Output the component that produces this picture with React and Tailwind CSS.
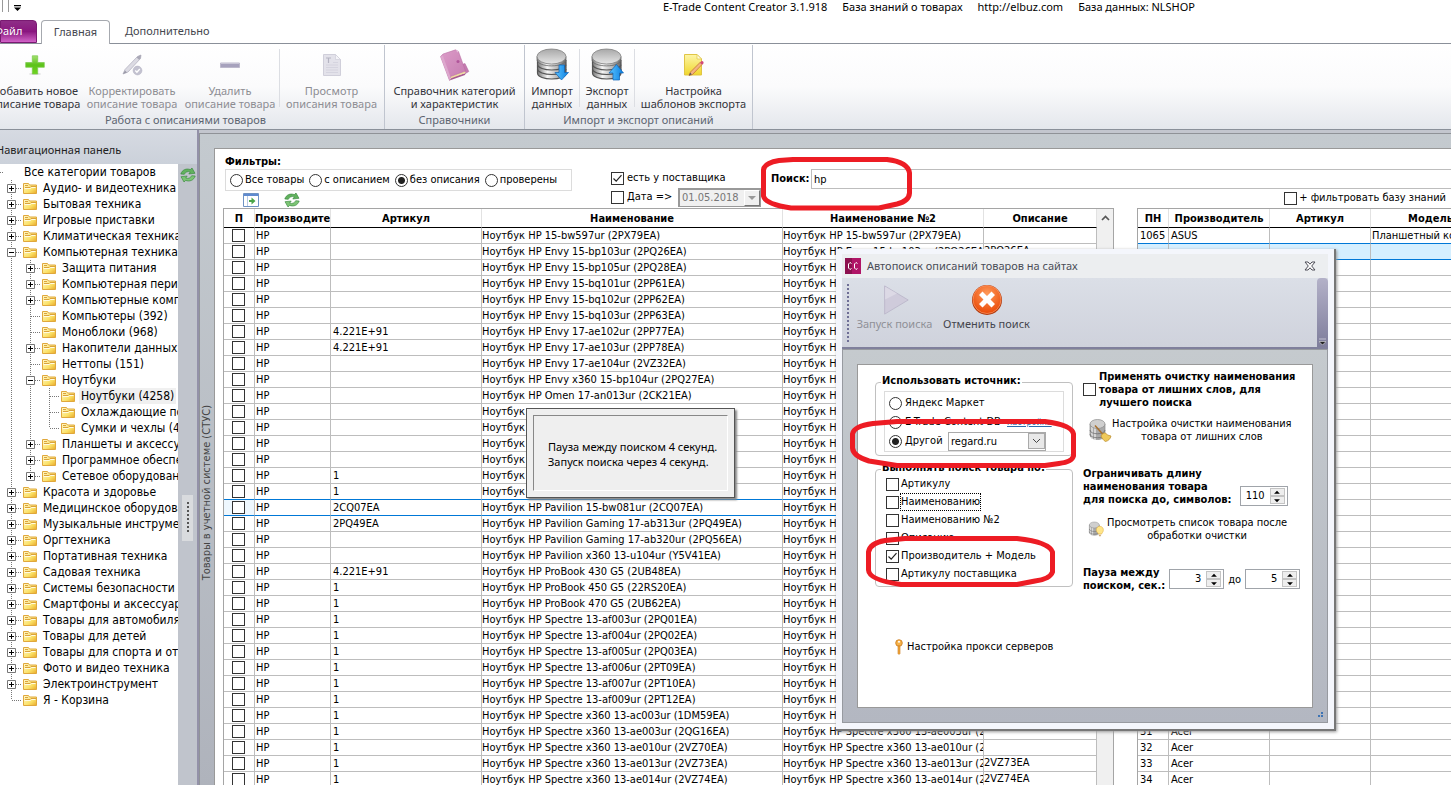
import React from "react";

const UI = "font-['Noto_Sans','Open_Sans',sans-serif]";

/* ---------- data ---------- */
const tree = [
  [1, "+", "Аудио- и видеотехника"],
  [1, "+", "Бытовая техника"],
  [1, "+", "Игровые приставки"],
  [1, "+", "Климатическая техника"],
  [1, "-", "Компьютерная техника"],
  [2, "+", "Защита питания"],
  [2, "+", "Компьютерная периферия"],
  [2, "+", "Компьютерные комплектующие"],
  [2, "", "Компьютеры (392)"],
  [2, "", "Моноблоки (968)"],
  [2, "+", "Накопители данных"],
  [2, "", "Неттопы (151)"],
  [2, "-", "Ноутбуки"],
  [3, "", "Ноутбуки (4258)", "sel"],
  [3, "", "Охлаждающие подставки"],
  [3, "", "Сумки и чехлы (4)", "last"],
  [2, "+", "Планшеты и аксессуары"],
  [2, "+", "Программное обеспечение"],
  [2, "+", "Сетевое оборудование", "last"],
  [1, "+", "Красота и здоровье"],
  [1, "+", "Медицинское оборудование"],
  [1, "+", "Музыкальные инструменты"],
  [1, "+", "Оргтехника"],
  [1, "+", "Портативная техника"],
  [1, "+", "Садовая техника"],
  [1, "+", "Системы безопасности"],
  [1, "+", "Смартфоны и аксессуары"],
  [1, "+", "Товары для автомобиля"],
  [1, "+", "Товары для детей"],
  [1, "+", "Товары для спорта и отдыха"],
  [1, "+", "Фото и видео техника"],
  [1, "+", "Электроинструмент"],
  [1, "", "Я - Корзина", "last"],
];

const goods = [
  ["", "15-bw597ur (2PX79EA)"],
  ["", "Envy 15-bp103ur (2PQ26EA)", "2PQ26EA"],
  ["", "Envy 15-bp105ur (2PQ28EA)"],
  ["", "Envy 15-bq101ur (2PP61EA)"],
  ["", "Envy 15-bq102ur (2PP62EA)"],
  ["", "Envy 15-bq103ur (2PP63EA)"],
  ["4.221E+91", "Envy 17-ae102ur (2PP77EA)"],
  ["4.221E+91", "Envy 17-ae103ur (2PP78EA)"],
  ["", "Envy 17-ae104ur (2VZ32EA)"],
  ["", "Envy x360 15-bp104ur (2PQ27EA)"],
  ["", "Omen 17-an013ur (2CK21EA)"],
  ["", ""],
  ["", ""],
  ["", ""],
  ["", ""],
  ["1", ""],
  ["1", ""],
  ["2CQ07EA", "Pavilion 15-bw081ur (2CQ07EA)"],
  ["2PQ49EA", "Pavilion Gaming 17-ab313ur (2PQ49EA)"],
  ["", "Pavilion Gaming 17-ab320ur (2PQ56EA)"],
  ["", "Pavilion x360 13-u104ur (Y5V41EA)"],
  ["4.221E+91", "ProBook 430 G5 (2UB48EA)"],
  ["1", "ProBook 450 G5 (22RS20EA)"],
  ["1", "ProBook 470 G5 (2UB62EA)"],
  ["1", "Spectre 13-af003ur (2PQ01EA)"],
  ["1", "Spectre 13-af004ur (2PQ02EA)"],
  ["1", "Spectre 13-af005ur (2PQ03EA)"],
  ["1", "Spectre 13-af006ur (2PT09EA)"],
  ["1", "Spectre 13-af007ur (2PT10EA)"],
  ["1", "Spectre 13-af009ur (2PT12EA)"],
  ["1", "Spectre x360 13-ac003ur (1DM59EA)"],
  ["1", "Spectre x360 13-ae003ur (2QG16EA)"],
  ["1", "Spectre x360 13-ae010ur (2VZ70EA)"],
  ["1", "Spectre x360 13-ae013ur (2VZ73EA)", "2VZ73EA"],
  ["1", "Spectre x360 13-ae014ur (2VZ74EA)", "2VZ74EA"],
];

const base = goods.map((_, i) => {
  if (i === 0) return ["1065", "ASUS", "Планшетный компьютер"];
  if (i > 30) return [String(i), "Acer", ""];
  return ["", "", ""];
});

/* ---------- form primitives ---------- */
function Check({ checked, label }) {
  return (
    <span className="relative block size-[13px] shrink-0">
      <input
        type="checkbox"
        aria-label={label}
        defaultChecked={checked}
        className="peer block size-[13px] appearance-none border border-[#333] bg-white"
      />
      <svg viewBox="0 0 13 13" className="pointer-events-none absolute inset-0 hidden size-[13px] peer-checked:block">
        <path d="M2.5 6.5 5.2 9.2 10.5 3.2" fill="none" stroke="#222" strokeWidth="1.2" />
      </svg>
    </span>
  );
}

function Radio({ name, checked }) {
  return (
    <input
      type="radio"
      name={name}
      defaultChecked={checked}
      className="block size-[13px] shrink-0 appearance-none rounded-full border border-[#333] bg-white checked:bg-[radial-gradient(circle,#222_0_3px,#fff_4px)]"
    />
  );
}

function Spin({ value, label, wide }) {
  return (
    <div className={"flex h-[20px] items-center justify-end border border-[#a0a4aa] bg-white pr-[2px] " + (wide ? "w-[55px]" : "w-[48px]")}>
      <input aria-label={label} defaultValue={value} className="w-0 min-w-0 flex-1 pr-[5px] text-right text-[11px] leading-4 outline-none" />
      <div className="flex flex-col">
        {["M1 4.5h7L4.5 1z", "M1 1.5h7L4.5 5z"].map((d, i) => (
          <button key={i} aria-label={i ? "Меньше" : "Больше"} className="flex h-[8px] w-[15px] items-center justify-center border border-[#c4c4c4] bg-[#eee]">
            <svg viewBox="0 0 9 6" className="h-[5px] w-[8px]"><path d={d} fill="#000" /></svg>
          </button>
        ))}
      </div>
    </div>
  );
}

/* ---------- icons ---------- */
function Refresh() {
  return (
    <svg viewBox="0 0 16 16" className="size-[16px]">
      <path d="M.8 7C2 2.800 6.500 1 10.300 2.600L12 1l3 5.300-6.200.7 1.500-2C8 4 5.500 4.800 4.300 7.300z" fill="#62b25e" stroke="#2f8236" strokeWidth=".6" />
      <path d="M15.200 9C14 13.200 9.500 15 5.700 13.400L4 15 1 9.700 7.200 9l-1.500 2c2.300 1 4.800.200 6-2.300z" fill="#7cc474" stroke="#2f8236" strokeWidth=".6" />
    </svg>
  );
}

function Folder() {
  return (
    <svg viewBox="0 0 14 12" className="h-[12px] w-[14px] shrink-0">
      <defs>
        <linearGradient id="fg" x1="0" y1="0" x2="1" y2="1">
          <stop offset="0" stopColor="#fff8cf" /><stop offset=".6" stopColor="#fbe269" /><stop offset="1" stopColor="#e9a928" />
        </linearGradient>
      </defs>
      <path d="M.5 11.500v-10h5l1 1.500h7v8.500z" fill="url(#fg)" stroke="#e0a83c" />
      <path d="M2 3.500h3M2 5.500h5l1-1h5" fill="none" stroke="#dba33a" />
      <path d="M1.500 6.500h6l1-1h4" fill="none" stroke="#fffbe2" />
    </svg>
  );
}

function PlusIcon() {
  return (
    <svg viewBox="0 0 20 20" className="size-[20px]">
      <defs><linearGradient id="pg" x1="0" y1="0" x2="0" y2="1"><stop offset="0" stopColor="#a4e070" /><stop offset=".5" stopColor="#5cc21a" /><stop offset="1" stopColor="#6fd420" /></linearGradient></defs>
      <ellipse cx="10" cy="19" rx="6" ry="1" fill="#ddd" />
      <path d="M7.300.800h5.400v6.700h6.600v4.800h-6.600v6.700H7.300v-6.700H.700V7.500h6.600z" fill="url(#pg)" stroke="#79c84a" strokeWidth=".7" />
    </svg>
  );
}

function PencilIcon() {
  return (
    <svg viewBox="0 0 22 22" className="size-[22px]">
      <path d="M2 20 4 15.500 16.500 2.500 20 1l-.5 3.500L7 18z" fill="#dcdbe3" stroke="#b4b3c0" strokeWidth=".8" />
      <path d="M2 20l4-1.500-2-2z" fill="#9b9aa8" />
      <path d="M16.500 2.500 20 1l-.5 3.500-1.500 1.200-2.400-2.200z" fill="#a9a8b6" />
      <circle cx="16.500" cy="16.500" r="4.400" fill="#c3c2d0" stroke="#b3b2c2" strokeWidth=".6" />
      <path d="m14.300 16.500 1.600 1.700 2.900-3.200" fill="none" stroke="#fff" strokeWidth="1.300" />
    </svg>
  );
}

function MinusIcon() {
  return (
    <svg viewBox="0 0 20 20" className="size-[20px]">
      <path d="M.5 8h19v4.500H.5z" fill="#a7a2bd" stroke="#bdb9cc" />
      <path d="M1 8.500h18" stroke="#c9c6d6" />
    </svg>
  );
}

function DocIcon() {
  return (
    <svg viewBox="0 0 18 22" className="h-[22px] w-[18px]">
      <path d="M.5.500h12l5 5v16H.5z" fill="#e3e2ea" stroke="#d0cfda" />
      <path d="M12.500.500v5h5z" fill="#f4f4f8" stroke="#d0cfda" strokeWidth=".7" />
      <path d="M3 4h5M5.500 4v5" stroke="#b5b4c2" strokeWidth="1.200" />
      <path d="M3 11h12M3 13.500h12M3 16h12M3 18.500h12M10 8.500h5" stroke="#d2d1dc" strokeWidth=".8" />
    </svg>
  );
}

function BookIcon() {
  return (
    <svg viewBox="0 0 32 32" className="size-[32px]">
      <defs><linearGradient id="bk" x1="0" y1="0" x2="1" y2="1"><stop offset="0" stopColor="#dc9cc8" /><stop offset="1" stopColor="#c57bb0" /></linearGradient></defs>
      <path d="M23 15.500l3-1 3.800 8-3.300 2z" fill="#c57bb0" stroke="#ad6597" strokeWidth=".5" />
      <path d="M10.500 31.500 26 26l.8-2L13 28z" fill="#a65a91" />
      <path d="M11.500 29.500 26.500 24l-.5-2-15.500 5.500z" fill="#f0dba0" />
      <path d="M1.500 7.500 4 5 16.500.800l3 1.700L26.500 22 11.500 27.500l-1 4z" fill="url(#bk)" stroke="#b5689f" strokeWidth=".5" />
      <path d="M1.500 7.500l2.500-.5L11.500 28l-1 3.500z" fill="#dda8cd" />
      <path d="M16.500.800 19.500 2.500l-1 1z" fill="#e8bfdc" />
      <circle cx="19" cy="12.500" r="1.500" fill="#b0559a" />
    </svg>
  );
}

function Db({ up }) {
  return (
    <svg viewBox="0 0 33 33" className="size-[33px]">
      <defs>
        <linearGradient id="dbg" x1="0" y1="0" x2="1" y2="0"><stop offset="0" stopColor="#777" /><stop offset=".35" stopColor="#f5f5f5" /><stop offset=".7" stopColor="#b5b5b5" /><stop offset="1" stopColor="#666" /></linearGradient>
        <linearGradient id="dbt" x1="0" y1="0" x2="0" y2="1"><stop offset="0" stopColor="#a8a8a8" /><stop offset="1" stopColor="#e6e6e6" /></linearGradient>
        <linearGradient id="ar" x1="0" y1="0" x2="1" y2="0"><stop offset="0" stopColor="#5cc4ff" /><stop offset="1" stopColor="#0b7fe0" /></linearGradient>
      </defs>
      {[21.500, 17, 12.500].map((y) => (
        <path key={y} d={`M1.500 ${y}v3.500c0 8 28.500 8 28.500 0V${y}z`} fill="url(#dbg)" stroke="#555" strokeWidth="1.200" />
      ))}
      <path d="M1 8.500v3c0 8.500 29 8.500 29 0v-3z" fill="url(#dbg)" stroke="#666" strokeWidth=".8" />
      <ellipse cx="15.500" cy="8.500" rx="14.500" ry="7.500" fill="url(#dbt)" stroke="#808080" strokeWidth=".8" />
      <path d={up ? "M22 32V25h-4l7.500-8.500L32.500 25h-4v7z" : "M23 17h5.500v7.500h4L25.500 32 19 24.500h4z"} fill="url(#ar)" stroke="#0b63b8" strokeWidth=".7" />
    </svg>
  );
}

function NoteIcon() {
  return (
    <svg viewBox="0 0 22 24" className="h-[24px] w-[22px]">
      <defs><linearGradient id="nt" x1="0" y1="0" x2="0" y2="1"><stop offset="0" stopColor="#fdf5a8" /><stop offset="1" stopColor="#f0d72c" /></linearGradient></defs>
      <path d="M1.500 1.500H14l4.500 4.500v16h-17z" fill="url(#nt)" stroke="#e0c545" />
      <path d="M14 1.500 18.500 6H14z" fill="#fffbe0" stroke="#e0c545" strokeWidth=".7" />
      <path d="M6 22.500 7.500 19 17.500 9l2 2L9.500 21.500z" fill="#f2b483" stroke="#c26a2a" strokeWidth=".7" />
      <path d="M6 22.500l1.200-2.800 1.600 1.600z" fill="#555" />
      <circle cx="19" cy="9.700" r="1.600" fill="#d3487a" />
    </svg>
  );
}

function SmallDb({ bulb, className }) {
  return (
    <svg viewBox="0 0 24 24" className={className}>
      <path d="M2 6v11c0 6 15 6 15 0V6z" fill="#a9a9a9" stroke="#8b8b8b" strokeWidth=".7" />
      <path d="M4 9v12M7 10v12" stroke="#e4e4e4" strokeWidth="1.500" />
      <path d="M2 12c0 5 15 5 15 0M2 16c0 5 15 5 15 0" fill="none" stroke="#6f6f6f" strokeWidth=".8" />
      <ellipse cx="9.500" cy="6" rx="7.500" ry="4.500" fill="#cfcfcf" stroke="#8b8b8b" strokeWidth=".7" />
      {bulb ? (
        <g>
          <path d="M12.500 14a5.300 5.300 0 1 1 10.500 0c0 2.500-2 3.500-2.500 5.500h-5c-.5-2-3-3-3-5.500z" fill="#ffe58a" stroke="#dfae3c" strokeWidth=".8" />
          <path d="M15.500 20.500h4.500l-2 3z" fill="#c9a46a" />
        </g>
      ) : (
        <g>
          <path d="M7 7.500 15.500 17" stroke="#a8702e" strokeWidth="1.500" />
          <path d="M13 18c1-2 2.500-3.500 4.500-3l2 2 3.500 1c-.5 3-3 5-5.500 5.500-2-1-3.500-3-4.500-5.500z" fill="#efc95a" stroke="#b98a2a" strokeWidth=".7" />
        </g>
      )}
    </svg>
  );
}

/* ---------- ribbon ---------- */
function RibbonButton({ icon, lines, width, disabled }) {
  return (
    <button disabled={disabled} className={"flex shrink-0 flex-col items-center text-[11px] leading-[13px] whitespace-nowrap " + width + (disabled ? " text-[#8d8d93]" : " text-[#33343a]")}>
      <span className="flex h-[39px] items-center justify-center">{icon}</span>
      <span>{lines[0]}</span>
      <span>{lines[1]}</span>
    </button>
  );
}

function RibbonGroup({ title, children, className }) {
  return (
    <section className={"flex shrink-0 flex-col border-r border-[#c0c5cf] " + className}>
      <div className="flex h-[67px]">{children}</div>
      <h2 className="text-center text-[11px] leading-4 text-[#5c6470]">{title}</h2>
    </section>
  );
}

function Sep() {
  return <span className="mt-1 h-[58px] w-px shrink-0 bg-[#dcdee3]" />;
}

/* ---------- tree ---------- */
function Guide({ mark, cell, end }) {
  return (
    <svg viewBox="0 0 19 16" className="h-[16px] w-[19px] shrink-0">
      <path d={end ? "M9.500 0v8" : "M9.500 0v16"} stroke="#777" strokeDasharray="1 1" />
      {cell === "node" && <path d="M10 8.500h9" stroke="#777" strokeDasharray="1 1" />}
      {mark && (
        <g>
          <path d="M5.500 4.500h8v8h-8z" fill="#fff" stroke="#777" />
          <path d={mark === "+" ? "M7 8.500h5M9.500 6v5" : "M7 8.500h5"} stroke="#000" />
        </g>
      )}
    </svg>
  );
}

function NavTree() {
  return (
    <ul className="text-[12px] leading-4">
      <li className="flex h-4 items-center whitespace-nowrap">
        <span className="w-[3px] border-t border-dotted border-[#777]" />
        <span className="ml-[21px]">Все категории товаров</span>
      </li>
      {tree.map(([level, mark, text, flag]) => (
        <li key={text} className="flex h-4 items-center pl-[2px] whitespace-nowrap">
          {level > 1 && <Guide cell="line" />}
          {level > 2 && <Guide cell="line" />}
          <Guide cell="node" mark={mark} end={flag === "last"} />
          <span className="ml-[2px]"><Folder /></span>
          <span className={"ml-[4px] px-[2px] " + (flag === "sel" ? "bg-[#f0f0f0]" : "")}>{text}</span>
        </li>
      ))}
    </ul>
  );
}

/* ---------- tables ---------- */
const th = "h-[19px] overflow-hidden border-b border-black border-r border-r-[#e2e2e2] p-0 pt-[2px] text-center text-[11px] leading-4 font-bold whitespace-nowrap";
const text = "pt-px leading-[14px]";

function Cell({ children, line, fit, fill }) {
  return (
    <td className={"h-4 overflow-hidden border-r border-b border-r-[#bdbdbd] p-0 whitespace-nowrap " + (line || "border-b-[#bdbdbd]") + " " + (fit || text) + " " + (fill || "")}>
      {children}
    </td>
  );
}

function GoodsTable() {
  return (
    <div className="flex w-[891px] shrink-0 border border-b-0 border-[#a5a5a5]">
      <table className="w-[873px] table-fixed border-separate border-spacing-0">
        <colgroup>
          <col className="w-[31px]" /><col className="w-[76px]" /><col className="w-[151px]" />
          <col className="w-[301px]" /><col className="w-[201px]" /><col className="w-[113px]" />
        </colgroup>
        <thead>
          <tr>
            {["П", "Производитель", "Артикул", "Наименование", "Наименование №2", "Описание"].map((h, i) => (
              <th key={h} className={th + (i === 1 ? " text-left" : "")}>{h}</th>
            ))}
          </tr>
        </thead>
        <tbody>
          {goods.map(([art, model, desc], i) => {
            const line = i === 16 || i === 17 ? "border-b-[#0078d7]" : "";
            const name = "Ноутбук HP " + model;
            return (
              <tr key={i}>
                <Cell line={line} fit="leading-[15px]" fill={i === 17 ? "bg-[#eef7fe]" : ""}><div className="flex justify-center pr-[2px]"><Check label={name} /></div></Cell>
                <Cell line={line}><span className="pl-[1px]">HP</span></Cell>
                <Cell line={line}><span className="pl-[2px]">{art}</span></Cell>
                <Cell line={line}>{model ? name : "Ноутбук"}</Cell>
                <Cell line={line}>{name}</Cell>
                <Cell line={line} fit="align-top leading-[13px]">{desc}</Cell>
              </tr>
            );
          })}
        </tbody>
      </table>
      <div className="ml-auto w-[16px] bg-[#f0f0f0]">
        <button aria-label="Вверх" className="flex h-[18px] w-full items-center justify-center">
          <svg viewBox="0 0 9 6" className="h-[6px] w-[9px]"><path d="M1 5 4.500 1.500 8 5" fill="none" stroke="#555" strokeWidth="1.700" /></svg>
        </button>
      </div>
    </div>
  );
}

function BaseTable() {
  return (
    <div className="ml-[23px] min-w-0 flex-1 overflow-hidden border-t border-l border-[#a5a5a5]">
      <table className="w-full min-w-[353px] table-fixed border-separate border-spacing-0">
        <colgroup><col className="w-[31px]" /><col className="w-[101px]" /><col className="w-[101px]" /><col /></colgroup>
        <thead>
          <tr>{["ПН", "Производитель", "Артикул", "Модель"].map((h) => <th key={h} className={th}>{h}</th>)}</tr>
        </thead>
        <tbody>
          {base.map(([n, brand, model], i) => {
            const line = i < 2 ? "border-b-[#0078d7]" : "";
            const fill = i === 1 ? "bg-[#d5efff]" : "";
            return (
              <tr key={i}>
                <Cell line={line} fill={fill}><span className="pl-[2px]">{n}</span></Cell>
                <Cell line={line} fill={fill}><span className="pl-[2px]">{brand}</span></Cell>
                <Cell line={line} fill={fill} />
                <Cell line={line} fill={fill}><span className="pl-[1px]">{model}</span></Cell>
              </tr>
            );
          })}
        </tbody>
      </table>
    </div>
  );
}

/* ---------- filters ---------- */
function Filters() {
  const modes = ["Все товары", "с описанием", "без описания", "проверены"];
  return (
    <div className="flex h-[59px] pl-[10px]">
      <div className="w-[347px] shrink-0 pt-[6px]">
        <div className="h-[14px] leading-[14px] font-bold">Фильтры:</div>
        <div className="flex h-[22px] items-center gap-[5px] border border-[#dcdcdc] pl-[4px] whitespace-nowrap">
          {modes.map((m, i) => (
            <label key={m} className="flex items-center gap-[2px]"><Radio name="mode" checked={i === 2} />{m}</label>
          ))}
        </div>
        <div className="flex h-[17px] items-center gap-[25px] pl-[18px]">
          <button aria-label="Перенести">
            <svg viewBox="0 0 16 14" className="block h-[14px] w-[16px]">
              <path d="M.5.500h15v13H.5z" fill="#fff" stroke="#6f93c4" /><path d="M1 2h14" stroke="#5f8bd0" strokeWidth="2" />
              <path d="M4.500 3v10" stroke="#b9cbe4" /><path d="M6 7h2.500V4.500L12.500 8l-4 3.500V9H6z" fill="#4aa548" />
            </svg>
          </button>
          <button aria-label="Обновить"><Refresh /></button>
        </div>
      </div>
      <div className="ml-[39px] w-[160px] shrink-0 pt-[20px]">
        <label className="flex h-[19px] items-center gap-[3px]"><Check checked />есть у поставщика</label>
        <div className="flex h-[18px] items-center">
          <label className="flex w-[67px] items-center gap-[3px] whitespace-nowrap"><Check />Дата =&gt;</label>
          <div className="relative h-[19px] w-[83px]">
            <select disabled aria-label="Дата" className="h-[19px] w-full appearance-none border border-t-2 border-l-2 border-[#999] bg-[#f0f0f0] pl-[2px] text-[11px] leading-4 text-[#777] opacity-100">
              <option>01.05.2018</option>
            </select>
            <span className="pointer-events-none absolute top-[2px] right-px flex h-[16px] w-[16px] items-center justify-center border border-white border-r-[#777] border-b-[#777] bg-[#f0f0f0]">
              <svg viewBox="0 0 8 4" className="h-[4px] w-[8px]"><path d="M0 0h8L4 4z" fill="#999" /></svg>
            </span>
          </div>
        </div>
      </div>
      <div className="min-w-0 flex-1 pt-[20px]">
        <label className="flex h-[20px] items-center font-bold">
          <span className="w-[40px] whitespace-nowrap">Поиск:</span>
          <input defaultValue="hp" className="h-[20px] min-w-0 flex-1 border border-r-0 border-[#bdbdbd] pl-[2px] text-[11px] font-normal outline-none" />
        </label>
        <label className="flex h-[18px] items-center justify-end gap-[2px] pr-[5px]"><Check />+ фильтровать базу знаний</label>
      </div>
    </div>
  );
}

/* ---------- dialogs ---------- */
function PauseMessage() {
  return (
    <div role="status" className={"absolute top-[408px] left-[526px] w-[209px] border border-[#555] bg-[#efefef] p-[6px] shadow-[2px_2px_2px_#888] " + UI}>
      <div className="border border-t-[#888] border-r-white border-b-white border-l-[#888] px-[14px] pt-[23px] pb-[21px] text-[11px] leading-[15px] whitespace-nowrap text-black">
        <p>Пауза между поиском 4 секунд.</p>
        <p>Запуск поиска через 4 секунд.</p>
      </div>
    </div>
  );
}

const legend = "absolute -top-[10px] left-[5px] bg-white px-[1px] text-[11px] leading-4 font-bold whitespace-nowrap";

function SearchDialog() {
  const by = [["Артикулу"], ["Наименованию"], ["Наименованию №2"], ["Описанию"], ["Производитель + Модель", true], ["Артикулу поставщика"]];
  return (
    <div role="dialog" aria-label="Автопоиск описаний товаров на сайтах" className="absolute top-[249px] left-[836px] flex h-[482px] w-[500px] flex-col border-r-2 border-b-2 border-[#777] bg-[#f4f6fc] px-[6px] pb-[6px] shadow-[1px_1px_3px_#999]">
      <header className="mt-[5px] flex h-[24px] shrink-0 items-center bg-[#eceef0] pl-[3px]">
        <svg viewBox="0 0 16 16" className="size-[16px]">
          <path d="M0 0h16v16H0z" fill="#b01567" /><path d="M0 0h7v16H0z" fill="#8d1150" />
          <path d="M6.500 5.500 5 4.500 3.500 6v4L5 11.500l1.500-1M12.500 5.500 11 4.500 9.500 6v4l1.500 1.500 1.500-1" fill="none" stroke="#fff" />
        </svg>
        <h2 className={"ml-[6px] text-[11px] leading-4 text-[#4a4d57] " + UI}>Автопоиск описаний товаров на сайтах</h2>
        <button aria-label="Закрыть" className="mr-[12px] ml-auto">
          <svg viewBox="0 0 12 10" className="block h-[10px] w-[12px]"><path d="M1 1h3l2 2.200L8 1h3L7.700 5 11 9H8L6 6.800 4 9H1l3.300-4z" fill="#fff" stroke="#4d4d57" /></svg>
        </button>
      </header>
      <div className="flex h-[71px] shrink-0 border-b-2 border-[#80809c] bg-linear-to-b from-[#dbdfe7] to-[#cfd2dc]">
        <span className="mt-[6px] ml-[5px] h-[58px] w-[2px] bg-[repeating-linear-gradient(#6f6f96_0_2px,transparent_2px_4px)]" />
        <div className={"flex pt-[6px] text-[11px] leading-4 whitespace-nowrap " + UI}>
          <button disabled className="flex w-[91px] flex-col items-center text-[#8f9097]">
            <svg viewBox="0 0 32 34" className="h-[32px] w-[32px]"><path d="M5 2v30l25-15z" fill="#cfcbdb" stroke="#bcb8cb" /><path d="M5.500 16.500 18 10 5.500 3z" fill="#dcd9e5" /></svg>
            <span>Запуск поиска</span>
          </button>
          <button className="flex w-[93px] flex-col items-center text-[#44454d]">
            <svg viewBox="0 0 32 32" className="size-[32px]">
              <defs><radialGradient id="cx" cx=".5" cy=".3" r=".7"><stop offset="0" stopColor="#ff9a5a" /><stop offset="1" stopColor="#ea4a08" /></radialGradient></defs>
              <circle cx="16" cy="16" r="15" fill="#b33a0c" /><circle cx="16" cy="15.500" r="14" fill="url(#cx)" stroke="#ff9b69" strokeWidth=".7" />
              <path d="m11.500 7.500 4.500 4.500 4.500-4.500 3.500 3.500-4.500 4.500L24 20l-3.500 3.500L16 19l-4.500 4.500L8 20l4.500-4.500L8 11z" fill="#fff" />
            </svg>
            <span>Отменить поиск</span>
          </button>
        </div>
        <span className="ml-auto flex w-[11px] items-end justify-center rounded-t-sm bg-linear-to-b from-[#b3b1c8] to-[#7f7e9c] pb-[2px]">
          <svg viewBox="0 0 7 7" className="size-[7px]"><path d="M0 1h7M0 3.500h7L3.500 7z" fill="#222" stroke="#fff" strokeWidth=".5" /></svg>
        </span>
      </div>
      <div className="relative min-h-0 flex-1 border border-[#979aa0] bg-linear-to-b from-[#c5cace] to-[#b3b7c1] px-[14px] pt-[14px] pb-[14px]">
        <div className="flex h-full border border-[#999] bg-white pl-[17px] text-[11px]">
          <div className="w-[198px] shrink-0 pt-[17px]">
            <div role="group" aria-label="Использовать источник" className="relative h-[74px] rounded border border-[#c0c0c0] px-[8px] pt-[8px]">
              <span className={legend}>Использовать источник:</span>
              <div className="flex h-[61px] flex-col border border-[#dcdcdc] pt-[2px] pl-[4px]">
                <label className="flex h-[19px] items-center gap-[3px]"><Radio name="src" />Яндекс Маркет</label>
                <div className="flex h-[19px] items-center whitespace-nowrap">
                  <label className="flex w-[118px] items-center gap-[3px]"><Radio name="src" />E-Trade Content DB</label>
                  <a href="#settings" className="text-[9px] text-[#2b6cab] underline">настройка</a>
                </div>
                <div className="flex h-[19px] items-center">
                  <label className="flex w-[59px] items-center gap-[3px]"><Radio name="src" checked />Другой</label>
                  <div className="relative w-[98px]">
                    <select aria-label="Сайт" className="block h-[19px] w-full appearance-none border border-[#aaa] bg-white pl-[2px] text-[11px] leading-4"><option>regard.ru</option></select>
                    <span className="pointer-events-none absolute top-px right-px flex h-[16px] w-[17px] items-center justify-center border border-[#aaa] bg-[#e8e8e8]">
                      <svg viewBox="0 0 9 6" className="h-[6px] w-[9px]"><path d="M1 1l3.500 3.500L8 1" fill="none" stroke="#444" /></svg>
                    </span>
                  </div>
                </div>
              </div>
            </div>
            <div role="group" aria-label="Выполнять поиск товара по" className="relative mt-[13px] h-[118px] rounded border border-[#c0c0c0] pt-[5px] pl-[10px]">
              <span className={legend}>Выполнять поиск товара по:</span>
              {by.map(([t, on], i) => (
                <label key={t} className="flex h-[18px] items-center gap-[2px] whitespace-nowrap">
                  <Check checked={on} /><span className={i === 1 ? "outline outline-dotted outline-black" : ""}>{t}</span>
                </label>
              ))}
            </div>
            <button className="mt-[52px] ml-[20px] flex items-center gap-[4px]">
              <svg viewBox="0 0 8 16" className="h-[16px] w-[8px]"><circle cx="4" cy="4" r="3.300" fill="#f6b24a" stroke="#c9791c" strokeWidth=".8" /><circle cx="4" cy="2.800" r="1" fill="#fff" /><path d="M3 7h2v7.500L4 15.500 3 14.500z" fill="#f3a93e" stroke="#c9791c" strokeWidth=".6" /></svg>
              Настройка прокси серверов
            </button>
          </div>
          <div className="ml-[10px] min-w-0 flex-1 pt-[5px] leading-[13px] whitespace-nowrap">
            <label className="flex items-center gap-[3px] font-bold">
              <Check />
              <span>Применять очистку наименования<br />товара от лишних слов, для<br />лучшего поиска</span>
            </label>
            <button className="mt-[8px] ml-[5px] flex items-center text-center">
              <SmallDb className="size-[24px]" />
              <span>Настройка очистки наименования<br />товара от лишних слов</span>
            </button>
            <div className="mt-[24px] flex items-end gap-[8px] font-bold">
              <p>Ограничивать длину<br />наименования товара<br />для поиска до, символов:</p>
              <div className="font-normal"><Spin value="110" label="Символов" /></div>
            </div>
            <button className="mt-[10px] ml-[5px] flex items-center gap-[3px] text-center">
              <SmallDb bulb className="size-[16px]" />
              <span>Просмотреть список товара после<br />обработки очистки</span>
            </button>
            <div className="mt-[24px] flex items-center gap-[4px]">
              <p className="font-bold">Пауза между<br />поиском, сек.:</p>
              <Spin wide value="3" label="Пауза от" /><span>до</span><Spin wide value="5" label="Пауза до" />
            </div>
          </div>
        </div>
        <svg viewBox="0 0 6 6" className="absolute right-[4px] bottom-[4px] size-[6px]"><path d="M4 0h2v2H4zM4 3h2v2H4zM1 3h2v2H1z" fill="#3d74b5" /></svg>
      </div>
    </div>
  );
}

function Markers() {
  return (
    <svg viewBox="0 0 340 440" className="pointer-events-none absolute top-[150px] left-[745px] h-[440px] w-[340px]">
      <g fill="none" stroke="#ed1c24" strokeWidth="5" strokeLinejoin="round">
        <path d="M34 10.500 48 9.500H142Q163 12 164.500 23V43Q164 51 152 54L134 58H46Q20 54 18.500 46V20Q19 13 34 10.500z" />
        <path d="M128 273.500 152 271.500H300Q327 275 328.500 284V306Q327 312 314 313.500L300 315.500H152L124 311Q108 306 107.500 298V284Q109 276 128 273.500z" />
        <path d="M140 390.500 160 388.500H272Q304 392 307.500 402V422Q305 429 290 431L272 434.500H156Q124 430 123.500 420V402Q125 393 140 390.500z" />
      </g>
    </svg>
  );
}

/* ---------- page ---------- */
export default function App() {
  return (
    <div className="relative flex h-screen min-w-[1200px] flex-col overflow-hidden bg-white font-['DejaVu_Sans_Condensed','Noto_Sans',sans-serif] text-[11px] text-black">
      <header className={"flex h-[20px] shrink-0 text-[11px] leading-[14px] " + UI}>
        <button aria-label="Настройка панели" className="flex h-[13px] gap-[5px] pl-[2px]">
          <span className="h-[12px] w-px bg-[#999]" /><span className="h-[12px] w-px bg-[#999]" />
          <svg viewBox="0 0 7 6" className="mt-[5px] h-[6px] w-[7px]"><path d="M0 0h7v1.300H0zM0 2.500h7L3.500 6z" /></svg>
        </button>
        <h1 className="flex flex-1 justify-center gap-[15px] pl-[386px]">
          <span>E-Trade Content Creator 3.1.918</span><span>База знаний о товарах</span><span>http://elbuz.com</span><span>База данных: NLSHOP</span>
        </h1>
      </header>

      <nav className={"flex h-[24px] shrink-0 items-stretch border-b border-[#8a9099] text-[11px] text-[#44464e] " + UI}>
        <button className="w-[37px] rounded-tr-sm border border-[#7a1a72] bg-linear-to-b from-[#8e2d86] via-[#8a1580] to-[#d262c8] text-white"><span className="-ml-[7px] flex">Файл</span></button>
        <button className="-mb-px ml-[4px] w-[69px] rounded-t border border-b-0 border-[#a6a9af] bg-white">Главная</button>
        <button className="ml-[15px]">Дополнительно</button>
      </nav>

      <div className={"flex h-[86px] shrink-0 border-b border-[#8a9099] bg-linear-to-b from-white via-[#fbfbfc] to-[#e4e7ec] pt-px " + UI}>
        <RibbonGroup title="Работа с описаниями товаров" className="-ml-[13px] w-[398px]">
          <RibbonButton width="w-[96px]" icon={<PlusIcon />} lines={["Добавить новое", "описание товара"]} />
          <RibbonButton width="w-[98px]" disabled icon={<PencilIcon />} lines={["Корректировать", "описание товара"]} />
          <RibbonButton width="w-[98px]" disabled icon={<MinusIcon />} lines={["Удалить", "описание товара"]} />
          <Sep />
          <RibbonButton width="w-[103px]" disabled icon={<DocIcon />} lines={["Просмотр", "описания товара"]} />
        </RibbonGroup>
        <RibbonGroup title="Справочники" className="w-[140px]">
          <RibbonButton width="w-full" icon={<BookIcon />} lines={["Справочник категорий", "и характеристик"]} />
        </RibbonGroup>
        <RibbonGroup title="Импорт и экспорт описаний" className="w-[228px]">
          <RibbonButton width="w-[54px]" icon={<Db />} lines={["Импорт", "данных"]} />
          <Sep />
          <RibbonButton width="w-[54px]" icon={<Db up />} lines={["Экспорт", "данных"]} />
          <Sep />
          <RibbonButton width="w-[117px]" icon={<NoteIcon />} lines={["Настройка", "шаблонов экспорта"]} />
        </RibbonGroup>
      </div>

      <div className="flex min-h-0 flex-1 bg-[#c3c6ce]">
        <aside className="flex w-[199px] shrink-0 flex-col border-r-2 border-[#9391a8]">
          <h2 className={"h-[34px] overflow-hidden bg-linear-to-b from-[#d6dae2] to-[#cbd1da] pt-[12px] text-[11px] leading-4 whitespace-nowrap text-[#222] " + UI}>
            <span className="-ml-[4px] block">Навигационная панель</span>
          </h2>
          <div className="flex min-h-0 flex-1">
            <div className="w-[178px] shrink-0 overflow-hidden bg-white"><NavTree /></div>
            <div className="flex flex-1 flex-col items-center bg-[#c0c4cc] pt-[3px]">
              <button aria-label="Обновить дерево"><Refresh /></button>
              <span className="mt-[312px] flex h-[46px] w-[11px] justify-center bg-[#d9dbde] py-[7px]">
                <span className="w-[2px] bg-[repeating-linear-gradient(#555_0_2px,transparent_2px_4px)]" />
              </span>
            </div>
          </div>
        </aside>
        <div className="mt-[3px] flex min-w-0 flex-1 border-t border-l border-[#8f9297] bg-linear-to-b from-[#c4cacf] to-[#afb3bc]">
          <div className="flex w-[14px] shrink-0 items-end justify-center pb-[205px]">
            <span className="rotate-180 text-[11px] leading-[14px] whitespace-nowrap text-[#444] [writing-mode:vertical-rl]">Товары в учетной системе (СТУС)</span>
          </div>
          <main className="mt-[14px] flex min-w-0 flex-1 flex-col overflow-hidden border-t border-l border-[#999] bg-white">
            <Filters />
            <div className="flex min-h-0 flex-1 overflow-hidden pl-[8px]">
              <GoodsTable />
              <BaseTable />
            </div>
          </main>
        </div>
      </div>

      <PauseMessage />
      <SearchDialog />
      <Markers />
    </div>
  );
}
